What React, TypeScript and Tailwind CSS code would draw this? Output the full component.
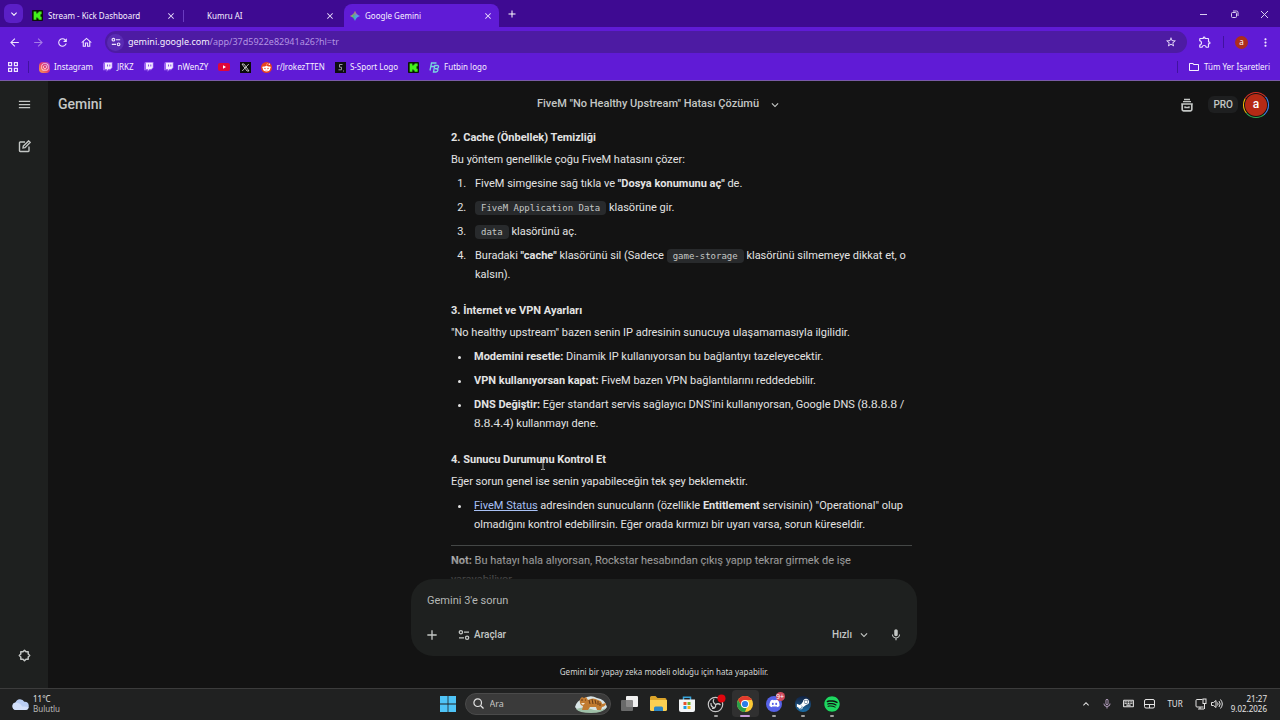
import type { ReactNode } from "react";
import { FaDiscord, FaInstagram, FaRedditAlien, FaSpotify, FaSteamSymbol } from "react-icons/fa";
import {
  MdArrowBack,
  MdArrowForward,
  MdClose,
  MdKeyboardArrowDown,
  MdKeyboardArrowUp,
  MdMenu,
  MdMic,
  MdMicNone,
  MdMoreVert,
  MdAdd,
  MdOutlineExtension,
  MdOutlineFolder,
  MdOutlineHome,
  MdOutlineKeyboard,
  MdRefresh,
  MdStarBorder,
} from "react-icons/md";

function KickIcon({ size }: { size: number }) {
  return (
    <svg width={size} height={size} viewBox="0 0 12 12" aria-hidden="true">
      <rect width="12" height="12" rx="1" fill="#0a1408" />
      <path d="M1.800 1.500h3v2.300h1.200v-1h1.200V1.500h3.300v3.100H9.300v1.400H8.200 9.300v1.400h1.200v3.100H7.200V9.200H6v-1H4.800v2.300h-3z" fill="#43f01c" />
    </svg>
  );
}

function TuneIcon({ size }: { size: number }) {
  return (
    <svg width={size} height={size} viewBox="0 0 12 12" fill="none" stroke="currentColor" strokeWidth="1.3" aria-hidden="true">
      <circle cx="2.9" cy="3.2" r="1.6" />
      <path d="M6 3.2h5M1 8.8h5" />
      <circle cx="9.1" cy="8.8" r="1.6" />
    </svg>
  );
}

function Spark() {
  return (
    <svg width="10" height="10" viewBox="0 0 24 24" aria-hidden="true">
      <defs>
        <linearGradient id="spark" x1="0" y1="0.5" x2="1" y2="0.5">
          <stop offset="0" stopColor="#e5b93c" />
          <stop offset="0.35" stopColor="#46b98a" />
          <stop offset="0.6" stopColor="#4f9df0" />
          <stop offset="1" stopColor="#5c9ef5" />
        </linearGradient>
        <linearGradient id="sparkTop" x1="0" y1="0" x2="0" y2="1">
          <stop offset="0" stopColor="#f0605a" />
          <stop offset="0.5" stopColor="#f0605a" stopOpacity="0" />
        </linearGradient>
      </defs>
      <path d="M12 0c2 6 6 10 12 12-6 2-10 6-12 12-2-6-6-10-12-12C6 10 10 6 12 0z" fill="url(#spark)" />
      <path d="M12 0c2 6 6 10 12 12-6 2-10 6-12 12-2-6-6-10-12-12C6 10 10 6 12 0z" fill="url(#sparkTop)" />
    </svg>
  );
}

function Tab({ icon, title, active }: { icon?: ReactNode; title: string; active?: boolean }) {
  return (
    <div
      className={
        active
          ? "ml-[2px] flex h-[23px] w-[155px] items-center rounded-t-lg bg-[#601bd6] pr-[6px] pl-[5px]"
          : "flex h-[23px] w-[158px] items-center pr-[7px] pl-[7px]"
      }
    >
      <span className="flex w-[11px] shrink-0 justify-center">{icon}</span>
      <a href="#tab" className="ml-[5px] flex-1 truncate text-[#f7f1ff]">{title}</a>
      <button aria-label="Sekmeyi kapat" className="text-[#efe6ff]">
        <MdClose size={10} />
      </button>
    </div>
  );
}

function Bookmark({ icon, label }: { icon: ReactNode; label?: string }) {
  return (
    <a href="#bookmark" aria-label={label ?? "Yer işareti"} className="flex items-center gap-1 text-[#f7f1ff]">
      {icon}
      {label && <span>{label}</span>}
    </a>
  );
}

function TwitchBadge() {
  return (
    <svg width="10" height="10" viewBox="0 0 10 10" aria-hidden="true">
      <path d="M1 0h8.500v5.800L7 8.200H5.200L3.500 10V8.200H0V2z" fill="#9d66f2" />
      <path d="M2 .8h6.800v4.600L7.300 6.900H5.400L4 8.200V6.900H2z" fill="#f3ecff" />
      <path d="M4.500 2.500v2M6.800 2.500v2" stroke="#7c3ae0" strokeWidth=".9" />
    </svg>
  );
}

function BrowserChrome() {
  return (
    <header className="shrink-0 font-['Noto_Sans',sans-serif] text-[8px]">
      <div className="flex h-[27px] items-end bg-[#3e0a92]">
        <button aria-label="Sekmelerde ara" className="mb-1 ml-1 flex h-[19px] w-[19px] items-center justify-center rounded-md bg-[#5b1fc6] text-white">
          <MdKeyboardArrowDown size={12} />
        </button>
        <div className="ml-[2px] flex items-center">
          <Tab icon={<KickIcon size={11} />} title="Stream - Kick Dashboard" />
          <span className="h-3 w-px bg-[#6a3cc0]" />
          <Tab title="Kumru AI" />
          <Tab icon={<Spark />} title="Google Gemini" active />
        </div>
        <button aria-label="Yeni sekme" className="mb-[7px] ml-[7px] text-white">
          <MdAdd size={12} />
        </button>
        <div className="mb-[8px] ml-auto flex w-[92px] items-center justify-between pr-[11px] pl-[10px] text-[#d9cdf0]">
          <button aria-label="Simge durumuna küçült" className="flex h-[10px] w-[10px] items-center justify-center">
            <span className="h-px w-[7px] bg-current" />
          </button>
          <button aria-label="Önceki boyut">
            <svg width="9" height="9" viewBox="0 0 9 9" fill="none" stroke="currentColor" aria-hidden="true">
              <rect x="1.5" y="2.5" width="5" height="5" rx="1" />
              <path d="M3 1h3.500q1.500 0 1.500 1.500V6" />
            </svg>
          </button>
          <button aria-label="Kapat">
            <svg width="9" height="9" viewBox="0 0 9 9" stroke="currentColor" aria-hidden="true">
              <path d="M1 1l7 7M8 1l-7 7" />
            </svg>
          </button>
        </div>
      </div>
      <div className="flex h-[30px] items-center bg-[#601bd6] pr-2 pl-2 text-[#efe6ff]">
        <div className="flex items-center gap-[11px]">
          <button aria-label="Geri"><MdArrowBack size={13} /></button>
          <button aria-label="İleri" className="text-[#a57be8]"><MdArrowForward size={13} /></button>
          <button aria-label="Yenile"><MdRefresh size={13} /></button>
          <button aria-label="Ana sayfa"><MdOutlineHome size={13} /></button>
        </div>
        <div className="ml-3 flex h-[22px] flex-1 items-center rounded-full bg-[#4d1ba3] pr-[10px] pl-[2px]">
          <button aria-label="Site bilgileri" className="flex h-[17px] w-[17px] items-center justify-center rounded-full bg-[#5a2bb4]">
            <TuneIcon size={10} />
          </button>
          <p className="ml-1 flex-1 text-[9px] text-[#b394e2]">
            <span className="text-[#f7f1ff]">gemini.google.com</span>/app/37d5922e82941a26?hl=tr
          </p>
          <button aria-label="Yer işareti ekle"><MdStarBorder size={12} /></button>
        </div>
        <button aria-label="Uzantılar" className="ml-[11px]"><MdOutlineExtension size={14} /></button>
        <span className="mx-[11px] h-3 w-px bg-[#4112a0]" />
        <button aria-label="Profil" className="flex h-[13px] w-[13px] items-center justify-center rounded-full bg-[#ad2d1c] text-[8px] leading-none text-white">a</button>
        <button aria-label="Menü" className="ml-[11px]"><MdMoreVert size={13} /></button>
      </div>
      <nav className="flex h-[24px] items-center gap-[10px] border-b border-[#7a5ba8] bg-[#601bd6] pr-[10px] pb-[3px] pl-[8px]">
        <button aria-label="Uygulamalar" className="text-[#efe6ff]">
          <svg width="10" height="10" viewBox="0 0 10 10" fill="none" stroke="currentColor" strokeWidth="1.200" aria-hidden="true">
            <path d="M.6.6h3v3h-3zM6.400.6h3v3h-3zM.6 6.400h3v3h-3zM6.400 6.400h3v3h-3z" />
          </svg>
        </button>
        <span className="h-3 w-px bg-[#4112a0]" />
        <Bookmark
          icon={
            <span className="flex h-[11px] w-[11px] items-center justify-center rounded-sm bg-gradient-to-tr from-[#f7a33c] via-[#e6376c] to-[#a32fd0] text-white">
              <FaInstagram size={8} />
            </span>
          }
          label="Instagram"
        />
        <Bookmark icon={<TwitchBadge />} label="JRKZ" />
        <Bookmark icon={<TwitchBadge />} />
        <Bookmark icon={<TwitchBadge />} label="nWenZY" />
        <Bookmark
          icon={
            <svg width="12" height="10" viewBox="0 0 12 10" aria-hidden="true">
              <rect y="1" width="12" height="8" rx="2" fill="#e0063a" />
              <path d="M5 3.200L8 5 5 6.800z" fill="#fff" />
            </svg>
          }
        />
        <Bookmark
          icon={
            <svg width="11" height="11" viewBox="0 0 11 11" aria-hidden="true">
              <rect width="11" height="11" fill="#0b0b0b" />
              <path d="M2 2h2l5 7H7zM8.800 2L2.200 9" fill="none" stroke="#e0e0e0" strokeWidth=".8" />
            </svg>
          }
        />
        <Bookmark
          icon={
            <span className="flex h-[11px] w-[11px] items-center justify-center rounded-full bg-[#e8441f] text-white">
              <FaRedditAlien size={9} />
            </span>
          }
          label="r/JrokezTTEN"
        />
        <Bookmark
          icon={
            <svg width="11" height="11" viewBox="0 0 11 11" aria-hidden="true">
              <rect width="11" height="11" fill="#0d0d12" />
              <path d="M7.500 2.500h-3v2.700h2v2.600H3.500M8.500 8.500v1" fill="none" stroke="#9a9aa5" />
            </svg>
          }
          label="S-Sport Logo"
        />
        <Bookmark icon={<KickIcon size={11} />} />
        <Bookmark
          icon={
            <svg width="11" height="11" viewBox="0 0 11 11" fill="none" stroke="#79d4e0" strokeWidth="1.300" aria-hidden="true">
              <path d="M1 8.500L2.500 1h5M2 4.500h3" />
              <path d="M4.500 10l1.300-6.500h2.400q1.600 0 1.300 1.600T7.800 6.700H6q3.300 0 2.900 1.700T6.800 10z" />
            </svg>
          }
          label="Futbin logo"
        />
        <span className="ml-auto h-3 w-px bg-[#4112a0]" />
        <Bookmark icon={<MdOutlineFolder size={12} />} label="Tüm Yer İşaretleri" />
      </nav>
    </header>
  );
}

function Sidebar() {
  return (
    <aside className="flex w-12 shrink-0 flex-col items-center bg-[#1e201f] pt-4 pb-[26px] text-[#c4c7c5]">
      <button aria-label="Menü"><MdMenu size={15} /></button>
      <button aria-label="Yeni sohbet" className="mt-[28px]">
        <svg width="13" height="13" viewBox="0 0 13 13" fill="none" stroke="currentColor" strokeWidth="1.400" aria-hidden="true">
          <path d="M7 2H2.200q-.7 0-.7.7v8.100q0 .7.700.7h8.100q.7 0 .7-.7V6.500" />
          <path d="M5 8l.3-2L10.600.9l1.500 1.500L7 7.700z" />
        </svg>
      </button>
      <button aria-label="Ayarlar" className="mt-auto">
        <svg width="13" height="13" viewBox="0 0 13 13" fill="none" stroke="currentColor" strokeWidth="1.500" strokeLinejoin="round" aria-hidden="true">
          <path d="M6.500 1.300l1.500 1.500h2.200V5l1.500 1.500L10.200 8v2.200H8l-1.500 1.500L5 10.200H2.800V8L1.300 6.500 2.800 5V2.800H5z" />
        </svg>
      </button>
    </aside>
  );
}

function Code({ children }: { children: ReactNode }) {
  return (
    <code className="rounded-sm bg-[#282a2c] px-[6px] py-[2px] font-['DejaVu_Sans_Mono',monospace] text-[9px] leading-none text-[#c4c7c5]">
      {children}
    </code>
  );
}

function Digits({ children }: { children: ReactNode }) {
  return <span className="font-['Liberation_Serif',serif] text-[13px] leading-none">{children}</span>;
}

function Section({ title, intro, children }: { title: string; intro: string; children: ReactNode }) {
  return (
    <section className="mb-[17px]">
      <h2 className="mb-[3px] font-bold">{title}</h2>
      <p className="mb-[5px]">{intro}</p>
      {children}
    </section>
  );
}

function Answer() {
  return (
    <article className="text-[11px] leading-[19px] text-[#e3e3e3]">
      <Section title="2. Cache (Önbellek) Temizliği" intro="Bu yöntem genellikle çoğu FiveM hatasını çözer:">
        <ol className="flex list-decimal flex-col gap-[5px] pl-[18px]">
          <li className="pl-[6px]">FiveM simgesine sağ tıkla ve <b>"Dosya konumunu aç"</b> de.</li>
          <li className="pl-[6px]"><Code>FiveM Application Data</Code> klasörüne gir.</li>
          <li className="pl-[6px]"><Code>data</Code> klasörünü aç.</li>
          <li className="pl-[6px]">
            Buradaki <b>"cache"</b> klasörünü sil (Sadece <Code>game-storage</Code> klasörünü silmemeye dikkat et, o kalsın).
          </li>
        </ol>
      </Section>
      <Section title="3. İnternet ve VPN Ayarları" intro={'"No healthy upstream" bazen senin IP adresinin sunucuya ulaşamamasıyla ilgilidir.'}>
        <ul className="flex list-disc flex-col gap-[5px] pl-5">
          <li className="pl-[3px]"><b>Modemini resetle:</b> Dinamik IP kullanıyorsan bu bağlantıyı tazeleyecektir.</li>
          <li className="pl-[3px]"><b>VPN kullanıyorsan kapat:</b> FiveM bazen VPN bağlantılarını reddedebilir.</li>
          <li className="pl-[3px]">
            <b>DNS Değiştir:</b> Eğer standart servis sağlayıcı DNS'ini kullanıyorsan, Google DNS (<Digits>8.8.8.8</Digits> /<br /><Digits>8.8.4.4</Digits>) kullanmayı dene.
          </li>
        </ul>
      </Section>
      <Section title="4. Sunucu Durumunu Kontrol Et" intro="Eğer sorun genel ise senin yapabileceğin tek şey beklemektir.">
        <ul className="list-disc pl-5">
          <li className="pl-[3px]">
            <a href="#status" className="text-[#a8c0f5] underline">FiveM Status</a> adresinden sunucuların (özellikle <b>Entitlement</b> servisinin) "Operational" olup olmadığını kontrol edebilirsin. Eğer orada kırmızı bir uyarı varsa, sorun küreseldir.
          </li>
        </ul>
      </Section>
      <hr className="-mt-[6px] mb-[5px] border-[#444746]" />
      <p><b>Not:</b> Bu hatayı hala alıyorsan, Rockstar hesabından çıkış yapıp tekrar girmek de işe yarayabiliyor.</p>
    </article>
  );
}

function Composer() {
  return (
    <form className="flex h-[77px] flex-col justify-between rounded-[22px] bg-[#1e201f] px-4 pt-3 pb-[13px] text-[#c4c7c5]">
      <input aria-label="İstem girin" placeholder="Gemini 3'e sorun" className="w-full bg-transparent text-[11px] leading-[19px] outline-none placeholder:text-[#b4b7b5]" />
      <div className="flex items-center text-[10px] leading-4 font-medium">
        <button type="button" aria-label="Dosya ekle" className="-ml-[3px]"><MdAdd size={16} /></button>
        <button type="button" className="ml-[18px] flex items-center gap-1">
          <TuneIcon size={12} />
          Araçlar
        </button>
        <button type="button" className="ml-auto flex items-center gap-[5px]">
          Hızlı
          <MdKeyboardArrowDown size={14} />
        </button>
        <button type="button" aria-label="Mikrofon" className="-mr-[2px] ml-[18px]"><MdMic size={14} /></button>
      </div>
    </form>
  );
}

function Main() {
  return (
    <main className="flex min-w-0 flex-1 flex-col bg-[#131313]">
      <div className="grid h-[47px] shrink-0 grid-cols-[1fr_auto_1fr] items-center pr-[11px] pl-[10px] text-[#c4c7c5]">
        <a href="#home" className="text-[14px] font-medium">Gemini</a>
        <button className="flex items-center gap-[9px] pr-2 text-[11px] font-medium">
          FiveM "No Healthy Upstream" Hatası Çözümü
          <MdKeyboardArrowDown size={14} />
        </button>
        <div className="flex items-center justify-end">
          <button aria-label="Geçmiş">
            <svg width="14" height="14" viewBox="0 0 14 14" fill="none" stroke="currentColor" strokeWidth="1.400" aria-hidden="true">
              <path d="M4 1.500h6M3 3.600h8" />
              <path d="M1.200 6h11.600M2.200 6v5.500q0 1.300 1.300 1.300h7q1.300 0 1.300-1.300V6" strokeWidth="1.700" />
              <path d="M5 8.200v1.300h4V8.200" />
            </svg>
          </button>
          <span className="ml-[14px] rounded-md bg-[#1e1f20] px-[5px] text-[10px] leading-[17px] font-medium">PRO</span>
          <button
            aria-label="Google Hesabı"
            className="ml-[5px] flex h-[26px] w-[26px] items-center justify-center rounded-full bg-[conic-gradient(#d93025_0deg_50deg,#4285f4_50deg_140deg,#34a853_140deg_230deg,#fbbc04_230deg_300deg,#d93025_300deg)]"
          >
            <span className="flex h-6 w-6 items-center justify-center rounded-full bg-[#131313]">
              <span className="flex h-[22px] w-[22px] items-center justify-center rounded-full bg-[#b62a15] pb-px text-[12px] leading-none font-medium text-white">a</span>
            </span>
          </button>
        </div>
      </div>
      <div className="relative min-h-0 flex-1 overflow-hidden">
        <div className="mx-auto max-w-[506px] pr-[5px] pl-10">
          <Answer />
        </div>
        <div className="absolute inset-x-0 bottom-0 h-8 bg-gradient-to-b from-transparent to-[#131313]/80" />
      </div>
      <div className="mx-auto w-full max-w-[506px] shrink-0">
        <Composer />
        <p className="pt-2 pb-2 text-center font-['Noto_Sans',sans-serif] text-[8px] leading-4 text-[#d4d7d5]">Gemini bir yapay zeka modeli olduğu için hata yapabilir.</p>
      </div>
    </main>
  );
}

function TaskButton({ label, icon, state }: { label: string; icon: ReactNode; state?: "open" | "active" }) {
  return (
    <button
      aria-label={label}
      className={
        state === "active"
          ? "relative mx-px flex h-[27px] w-[27px] items-center justify-center rounded bg-[#303030]"
          : "relative flex h-[27px] w-[29px] items-center justify-center"
      }
    >
      {icon}
      {state === "open" && <span className="absolute bottom-0 h-[2px] w-1 rounded-full bg-[#a0a0a0]" />}
      {state === "active" && <span className="absolute bottom-0 h-[2px] w-[10px] rounded-full bg-[#c79ad8]" />}
    </button>
  );
}

function Taskbar() {
  return (
    <footer className="grid h-8 shrink-0 grid-cols-[1fr_auto_1fr] items-center border-t border-[#3c3c3c] bg-[#202121] pb-[2px] font-['Noto_Sans',sans-serif] text-[8px] text-[#e4e4e4]">
      <button className="flex items-center gap-1 pl-3 text-left leading-[10px]">
        <svg width="17" height="12" viewBox="0 0 17 12" aria-hidden="true">
          <path d="M4 12a3.800 3.800 0 01-.5-7.500A4.800 4.800 0 0112.300 3.800 4.100 4.100 0 0113 12z" fill="#b9cdf3" />
          <path d="M4 12a3.800 3.800 0 01-.5-7.500Q9 5 10 8.500 15 8 16.800 9.500 16 12 13 12z" fill="#d3e0fa" />
        </svg>
        <span>11°C<br /><span className="text-[#b8b8b8]">Bulutlu</span></span>
      </button>
      <div className="flex items-center">
        <TaskButton
          label="Başlat"
          icon={
            <svg width="16" height="16" viewBox="0 0 16 16" aria-hidden="true">
              <path d="M0 0h7.600v7.600H0zM8.400 0H16v7.600H8.400zM0 8.400h7.600V16H0zM8.400 8.400H16V16H8.400z" fill="#4fc4f7" />
            </svg>
          }
        />
        <label className="mr-1 ml-[2px] flex h-[22px] w-[146px] items-center rounded-full border border-[#4a4a4a] bg-[#3a3a3a] pr-[2px] pl-[7px]">
          <svg width="11" height="11" viewBox="0 0 11 11" fill="none" stroke="#e4e4e4" strokeWidth="1.200" aria-hidden="true">
            <circle cx="4.700" cy="4.700" r="3.800" />
            <path d="M7.500 7.500l3 3" />
          </svg>
          <input placeholder="Ara" aria-label="Ara" className="ml-[6px] w-0 min-w-0 flex-1 bg-transparent text-[9px] outline-none placeholder:text-[#c4c4c4]" />
          <svg width="34" height="18" viewBox="0 0 34 18" aria-hidden="true">
            <path d="M1 12Q3 5 9 4q7-5 14-1 8 1 10 9-2 5-16 5T1 12z" fill="#d8e4e6" />
            <path d="M2 14q8-3 15 0t15-1q-3 5-15 5T2 14z" fill="#9fc0a8" />
            <path d="M6 4l2-2 2 1 2-1 2 3q5-3 10 0 4 1 4 4l4-1q0 3-4 4l-1 3h-4l-1-3h-6l-2 3H8l1-4q-4-1-3-7z" fill="#c07a30" />
            <path d="M15 5l1 4M18 4l1 5M21 5l1 4M24 6v4M26 8v3M7 5h2M11 5h1" stroke="#4c2a12" strokeWidth=".8" />
            <path d="M7 8h4l-2 2z" fill="#f4e5cd" />
          </svg>
        </label>
        <TaskButton
          label="Görev görünümü"
          icon={
            <svg width="17" height="15" viewBox="0 0 17 15" aria-hidden="true">
              <rect x="5" width="12" height="11" rx="1" fill="#f0f0f0" />
              <rect y="4" width="12" height="11" rx="1" fill="#777" fillOpacity=".85" />
            </svg>
          }
        />
        <TaskButton
          label="Dosya Gezgini"
          icon={
            <svg width="17" height="15" viewBox="0 0 17 15" aria-hidden="true">
              <path d="M0 1.500Q0 0 1.500 0h4l2 2H15q1.500 0 1.500 1.500V6H0z" fill="#dca42a" />
              <path d="M0 4h17v9.500q0 1.500-1.500 1.500h-14Q0 15 0 13.500z" fill="#fbd052" />
              <path d="M4 15v-3q0-1.500 1.500-1.500h6Q13 10.500 13 12v3z" fill="#2c86c4" />
            </svg>
          }
        />
        <TaskButton
          label="Microsoft Store"
          icon={
            <svg width="16" height="16" viewBox="0 0 16 16" aria-hidden="true">
              <path d="M4.500 4V1.200h7V4" fill="none" stroke="#38a5dc" strokeWidth="1.500" />
              <path d="M0 3.500h16V14q0 2-2 2H2q-2 0-2-2z" fill="#f3f5f7" />
              <path d="M4.500 6h3v3h-3z" fill="#e8502b" />
              <path d="M8.500 6h3v3h-3z" fill="#74b42c" />
              <path d="M4.500 10h3v3h-3z" fill="#1c9be0" />
              <path d="M8.500 10h3v3h-3z" fill="#f3b318" />
            </svg>
          }
        />
        <TaskButton
          label="OBS Studio"
          state="open"
          icon={
            <svg width="20" height="20" viewBox="0 0 20 20" aria-hidden="true">
              <circle cx="9.500" cy="10.500" r="7.200" fill="#1c1c1e" stroke="#c8c8c8" strokeWidth="1.200" />
              <path d="M8 5q-2 3 1.500 5.500M14.500 11q-2.500-2.500-5 0M6 14.500q4 0 3.700-4M5 9q-.5 4 4 5" fill="none" stroke="#c8c8c8" strokeWidth="1.200" />
              <circle cx="15.500" cy="4.500" r="4" fill="#e0060e" />
            </svg>
          }
        />
        <TaskButton
          label="Google Chrome"
          state="active"
          icon={
            <svg width="16" height="16" viewBox="0 0 16 16" aria-hidden="true">
              <circle cx="8" cy="8" r="8" fill="#fcc934" />
              <path d="M1.070 4A8 8 0 0114.930 4H8L4.540 10z" fill="#e33b2e" />
              <path d="M1.070 4L4.540 10q2 3 5 1.800L8 16A8 8 0 011.070 4z" fill="#2aa04a" />
              <circle cx="8" cy="8" r="4" fill="#fff" />
              <circle cx="8" cy="8" r="3.100" fill="#2c7de9" />
            </svg>
          }
        />
        <TaskButton
          label="Discord"
          state="open"
          icon={
            <>
              <span className="flex h-4 w-4 items-center justify-center rounded-full bg-[#5662e8] text-white"><FaDiscord size={11} /></span>
              <span className="absolute top-[2px] right-1 flex h-[9px] w-[9px] items-center justify-center rounded-full bg-[#cf4a5c] text-[7px] leading-none text-white">9+</span>
            </>
          }
        />
        <TaskButton
          label="Steam"
          state="open"
          icon={<span className="flex h-4 w-4 items-center justify-center rounded-full bg-gradient-to-b from-[#10203f] to-[#1b6fa8] text-white"><FaSteamSymbol size={14} /></span>}
        />
        <TaskButton
          label="Spotify"
          state="open"
          icon={<span className="rounded-full bg-[#101010] text-[#1ed760]"><FaSpotify size={16} /></span>}
        />
      </div>
      <div className="flex items-center justify-end pr-[13px]">
        <button aria-label="Gizli simgeler"><MdKeyboardArrowUp size={12} /></button>
        <button aria-label="Mikrofon" className="ml-[9px] text-[#b9a3c4]"><MdMicNone size={12} /></button>
        <button aria-label="Klavye" className="ml-[9px]"><MdOutlineKeyboard size={13} /></button>
        <button aria-label="Dokunmatik yüzey" className="ml-[9px]">
          <svg width="11" height="10" viewBox="0 0 11 10" fill="none" stroke="currentColor" aria-hidden="true">
            <rect x=".5" y=".5" width="10" height="8.500" rx="1.500" />
            <path d="M.5 5.500h10M5.500 5.500V9" />
          </svg>
        </button>
        <button className="ml-3">TUR</button>
        <button aria-label="Ağ ve ses" className="ml-3 flex items-center gap-1">
          <svg width="12" height="12" viewBox="0 0 12 12" fill="none" stroke="currentColor" aria-hidden="true">
            <path d="M7.500 1.500H2q-1 0-1 1V8q0 1 1 1h6.500M5 9v2M3 11h6M9.500 6v5" />
            <rect x="8" y="1" width="3" height="4.500" />
          </svg>
          <svg width="12" height="12" viewBox="0 0 12 12" fill="none" stroke="currentColor" aria-hidden="true">
            <path d="M.5 4.500h2l2.500-2v7l-2.500-2h-2zM6.500 4.500q1.200 1.500 0 3M8 3q2.400 3 0 6M9.500 1.500q3.600 4.500 0 9" />
          </svg>
        </button>
        <button className="ml-2 text-right leading-[10px]">21:27<br />9.02.2026</button>
      </div>
    </footer>
  );
}

export default function App() {
  return (
    <div className="relative flex h-screen flex-col overflow-hidden bg-[#131313] font-['Roboto',sans-serif]">
      <BrowserChrome />
      <div className="flex min-h-0 flex-1">
        <Sidebar />
        <Main />
      </div>
      <Taskbar />
      <svg className="pointer-events-none absolute top-[459px] left-[540px]" width="6" height="11" viewBox="0 0 6 11" fill="none" stroke="#d0d0d0" aria-hidden="true">
        <path d="M1 .5h1.500L3 1l.5-.5H5M3 1v9M1 10.500h1.500L3 10l.5.5H5" strokeWidth=".8" />
      </svg>
    </div>
  );
}
